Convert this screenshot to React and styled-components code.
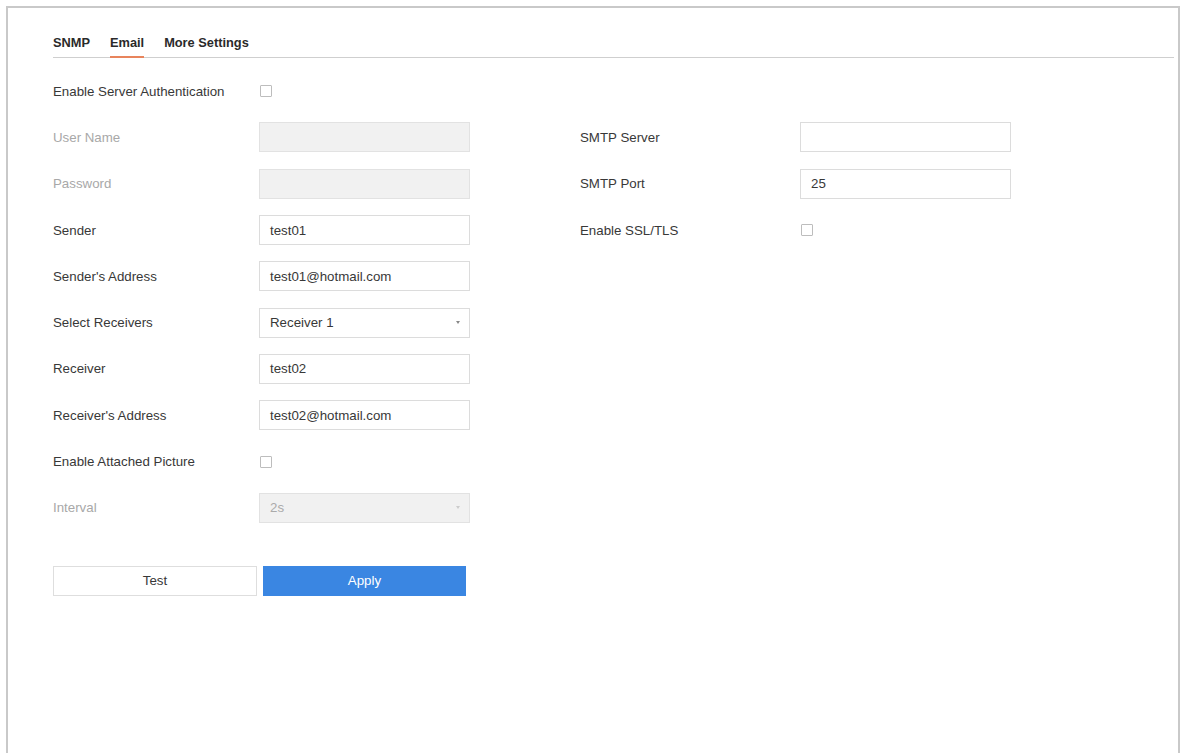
import React from "react";
import styled, { createGlobalStyle } from "styled-components";

const Global = createGlobalStyle`
  html, body { margin: 0; padding: 0; background: #fff; }
  body { font-family: "Liberation Sans", Arial, sans-serif; }
  * { box-sizing: border-box; }
`;

const Frame = styled.div`
  margin: 6px 4px 0 6px;
  height: 747px;
  border: 2px solid #c9c9c9;
  border-bottom: none;
  padding: 0 4px 0 45px;
`;

const TabBar = styled.div`
  height: 50px;
  display: flex;
  align-items: flex-end;
  gap: 20px;
  border-bottom: 1px solid #cfcfcf;
`;

const Tab = styled.div`
  font-size: 12.8px;
  font-weight: bold;
  color: #2a2a2a;
  line-height: 16px;
  padding-bottom: 5px;
  border-bottom: 2px solid ${(p) => (p.$active ? "#e8845c" : "transparent")};
  margin-bottom: -1px;
`;

const Columns = styled.div`
  display: flex;
  margin-top: 10px;
`;

const Column = styled.div`
  display: flex;
  flex-direction: column;
  width: ${(p) => p.$width}px;
`;

const Row = styled.div`
  height: 46.3px;
  display: flex;
  align-items: center;
`;

const Label = styled.div`
  width: ${(p) => p.$w}px;
  flex: none;
  font-size: 13.3px;
  color: ${(p) => (p.$disabled ? "#a8a8a8" : "#383838")};
`;

const Field = styled.div`
  width: 211px;
  height: 30px;
  border: 1px solid ${(p) => (p.$disabled ? "#e2e2e2" : "#dcdcdc")};
  background: ${(p) => (p.$disabled ? "#f1f1f1" : "#fff")};
  display: flex;
  align-items: center;
  justify-content: space-between;
  padding: 0 10px;
  font-size: 13.3px;
  color: ${(p) => (p.$disabled ? "#aaa" : "#383838")};
`;

const Caret = styled.span`
  width: 0;
  height: 0;
  border-left: 2.5px solid transparent;
  border-right: 2.5px solid transparent;
  border-top: 3px solid ${(p) => (p.$disabled ? "#ccc" : "#888")};
  margin-right: -1px;
`;

const Check = styled.div`
  width: 12px;
  height: 12px;
  border: 1px solid #bdbdbd;
  border-radius: 1px;
  background: #fff;
  margin-left: 1px;
`;

const Buttons = styled.div`
  display: flex;
  gap: 6px;
  margin-top: 35px;
`;

const Button = styled.div`
  width: ${(p) => p.$w}px;
  height: 30px;
  display: flex;
  align-items: center;
  justify-content: center;
  font-size: 13.3px;
  border: 1px solid ${(p) => (p.$primary ? "#3a86e2" : "#dedede")};
  background: ${(p) => (p.$primary ? "#3a86e2" : "#fff")};
  color: ${(p) => (p.$primary ? "#fff" : "#383838")};
`;

const Spacer = styled.div`
  width: ${(p) => p.$w}px;
  flex: none;
`;

function FormRow({ label, w, disabled, kind, value }) {
  return (
    <Row>
      <Label $w={w} $disabled={disabled}>{label}</Label>
      {kind === "check" ? (
        <Check />
      ) : (
        <Field $disabled={disabled}>
          <span>{value}</span>
          {kind === "select" && <Caret $disabled={disabled} />}
        </Field>
      )}
    </Row>
  );
}

const left = [
  { label: "Enable Server Authentication", kind: "check" },
  { label: "User Name", disabled: true, value: "" },
  { label: "Password", disabled: true, value: "" },
  { label: "Sender", value: "test01" },
  { label: "Sender's Address", value: "test01@hotmail.com" },
  { label: "Select Receivers", kind: "select", value: "Receiver 1" },
  { label: "Receiver", value: "test02" },
  { label: "Receiver's Address", value: "test02@hotmail.com" },
  { label: "Enable Attached Picture", kind: "check" },
  { label: "Interval", kind: "select", disabled: true, value: "2s" },
];

const right = [
  { label: "SMTP Server", value: "" },
  { label: "SMTP Port", value: "25" },
  { label: "Enable SSL/TLS", kind: "check" },
];

export default function App() {
  return (
    <>
      <Global />
      <Frame>
        <TabBar>
          <Tab>SNMP</Tab>
          <Tab $active>Email</Tab>
          <Tab>More Settings</Tab>
        </TabBar>
        <Columns>
          <Column $width={417}>
            {left.map((r) => (
              <FormRow key={r.label} w={206} {...r} />
            ))}
            <Buttons>
              <Button $w={204}>Test</Button>
              <Button $w={203} $primary>Apply</Button>
            </Buttons>
          </Column>
          <Spacer $w={110} />
          <Column $width={432}>
            <Row />
            {right.map((r) => (
              <FormRow key={r.label} w={220} {...r} />
            ))}
          </Column>
        </Columns>
      </Frame>
    </>
  );
}
